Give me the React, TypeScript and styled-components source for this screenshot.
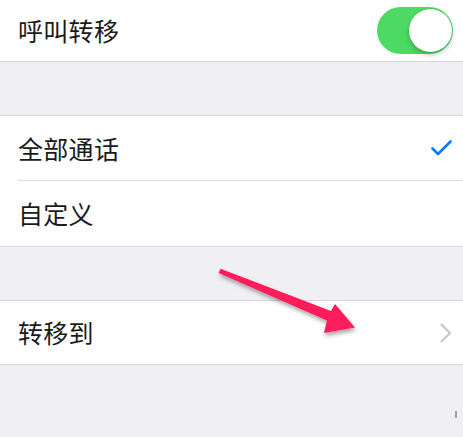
import styled, { createGlobalStyle } from "styled-components";

const GlobalStyle = createGlobalStyle`
  html, body {
    margin: 0;
    padding: 0;
    background: #efeff4;
  }
  body {
    font-family: "Noto Sans CJK SC", "Noto Sans", sans-serif;
    -webkit-font-smoothing: antialiased;
  }
`;

const Screen = styled.div`
  position: relative;
  width: 463px;
  height: 437px;
  overflow: hidden;
  background: #efeff4;
`;

const Group = styled.div<{ $top?: boolean }>`
  background: #fff;
  border-top: ${(p) => (p.$top ? "1px solid #d8d8dc" : "none")};
  border-bottom: 1px solid #d8d8dc;
`;

const Spacer = styled.div<{ $h: number }>`
  height: ${(p) => p.$h}px;
`;

const Row = styled.div<{ $h?: number }>`
  display: flex;
  align-items: center;
  justify-content: space-between;
  height: ${(p) => p.$h ?? 64}px;
  padding: 0 10px 0 18px;
  box-sizing: border-box;
`;

const Label = styled.span`
  font-size: 25px;
  color: #1a1a1a;
  letter-spacing: 0.3px;
  line-height: 1;
`;

const Divider = styled.div`
  height: 1px;
  margin-left: 18px;
  background: #dcdce0;
`;

const Toggle = styled.div`
  position: relative;
  width: 76px;
  height: 47px;
  border-radius: 24px;
  background: #4cd964;
  margin-right: 0;
`;

const Knob = styled.div`
  position: absolute;
  right: 1px;
  top: 2px;
  width: 43px;
  height: 43px;
  border-radius: 50%;
  background: #fff;
  box-shadow: 0 3px 5px rgba(0, 0, 0, 0.22), 0 0 0 0.5px rgba(0, 0, 0, 0.06);
`;

const Mark = styled.svg`
  display: block;
  margin-right: 1px;
`;

const ArrowLayer = styled.svg`
  position: absolute;
  left: 0;
  top: 0;
  pointer-events: none;
`;

const Scroll = styled.div`
  position: absolute;
  left: 455px;
  top: 411px;
  width: 1.5px;
  height: 7px;
  background: #9a9a9e;
  border-radius: 1px;
`;

const App = () => {
  return (
    <Screen>
      <GlobalStyle />
      <Group>
        <Row $h={61}>
          <Label>呼叫转移</Label>
          <Toggle>
            <Knob />
          </Toggle>
        </Row>
      </Group>
      <Spacer $h={53} />
      <Group $top>
        <Row $h={64}>
          <Label>全部通话</Label>
          <Mark width="21" height="16" viewBox="0 0 21 16">
            <path
              d="M1.5 8.5 L7 14 L19.5 1.5"
              fill="none"
              stroke="#007aff"
              strokeWidth="2.6"
              strokeLinecap="round"
              strokeLinejoin="round"
            />
          </Mark>
        </Row>
        <Divider />
        <Row $h={65}>
          <Label>自定义</Label>
        </Row>
      </Group>
      <Spacer $h={53} />
      <Group $top>
        <Row $h={63}>
          <Label>转移到</Label>
          <Mark width="12" height="20" viewBox="0 0 12 20">
            <path
              d="M1.5 1.5 L10 10 L1.5 18.5"
              fill="none"
              stroke="#c7c7cc"
              strokeWidth="2.2"
              strokeLinecap="round"
              strokeLinejoin="round"
            />
          </Mark>
        </Row>
      </Group>
      <ArrowLayer width="463" height="437" viewBox="0 0 463 437">
        <defs>
          <filter id="shadow" x="-20%" y="-20%" width="140%" height="160%">
            <feDropShadow dx="1" dy="3" stdDeviation="2" floodColor="#000" floodOpacity="0.35" />
          </filter>
        </defs>
        <polygon
          points="220.5,268.8 331,311 335,304 355,327.5 324,333 327,320.5 218.6,273"
          fill="#fe1a5a"
          filter="url(#shadow)"
        />
      </ArrowLayer>
      <Scroll />
    </Screen>
  );
};

export default App;
